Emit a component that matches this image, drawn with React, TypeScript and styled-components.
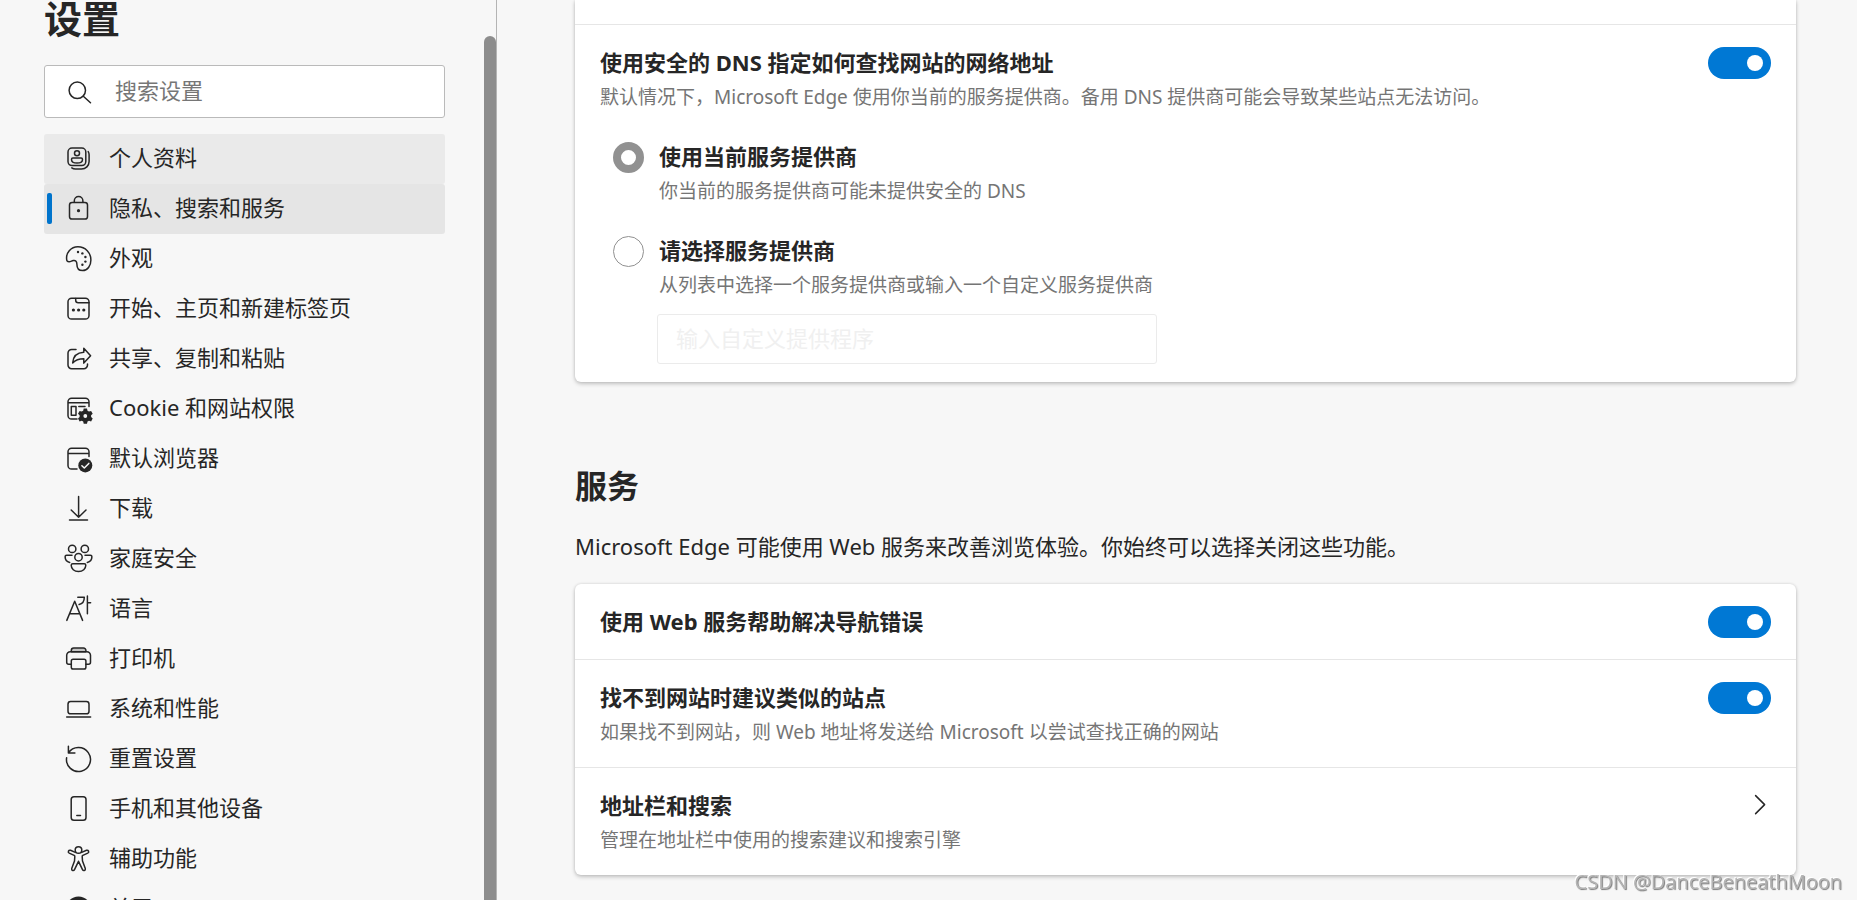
import React from 'react';
import styled, { createGlobalStyle, css } from 'styled-components';

const GlobalStyle = createGlobalStyle`
  *, *::before, *::after { box-sizing: border-box; }
  body {
    margin: 0;
    background: #f7f7f7;
    color: #262626;
    font-family: "Noto Sans", "Noto Sans CJK SC", sans-serif;
    font-size: 22px;
    line-height: 34px;
  }
  input, button { font: inherit; color: inherit; }
`;

const Page = styled.div`
  display: flex;
  height: 100vh;
  overflow: hidden;
`;

const Sidebar = styled.aside`
  display: grid;
  grid-template-columns: 1fr 12px;
  flex: 0 0 497px;
  border-right: 1px solid #b4b4b4;
  overflow: hidden;
`;

const SidebarBody = styled.div`
  min-width: 0;
  padding: 0 39px 0 44px;
`;

const PageTitle = styled.h1`
  margin: 0 0 29px;
  font-size: 38px;
  line-height: 36px;
  font-weight: 700;
`;

const SearchBox = styled.label`
  display: flex;
  align-items: center;
  gap: 23px;
  height: 53px;
  padding: 0 19px;
  margin-bottom: 16px;
  background: #fff;
  border: 1px solid #bababa;
  border-radius: 3px;
`;

const SearchInput = styled.input`
  flex: 1;
  min-width: 0;
  border: 0;
  padding: 0 0 4px;
  outline: none;
  background: transparent;
  &::placeholder { color: #767676; opacity: 1; }
`;

const NavItem = styled.a<{ $state?: 'hover' | 'active' }>`
  position: relative;
  display: flex;
  align-items: center;
  gap: 17px;
  height: 50px;
  padding-left: 20px;
  border-radius: 3px;
  color: inherit;
  text-decoration: none;
  white-space: nowrap;
  ${(p) => p.$state === 'hover' && css`background: #eaeaea;`}
  ${(p) => p.$state === 'active' && css`
    background: #e5e5e5;
    &::before {
      content: '';
      position: absolute;
      left: 3px;
      top: 9px;
      width: 5px;
      height: 31px;
      border-radius: 2px;
      background: #0074cc;
    }
  `}
`;

const NavLabel = styled.span`
  padding-bottom: 5px;
`;

const ScrollRail = styled.div`
  width: 12px;
  height: 100vh;
  padding-top: 36px;
`;

const ScrollHandle = styled.div`
  width: 12px;
  height: 100%;
  background: #8d8d8d;
  border-radius: 6px 6px 0 0;
`;

const Svg = styled.svg`
  display: block;
  flex: 0 0 28px;
  width: 28px;
  height: 28px;
  overflow: visible;
  fill: none;
  stroke: #262626;
  stroke-width: 1.5;
  stroke-linecap: round;
  stroke-linejoin: round;
  .solid { fill: #262626; stroke: none; }
  .light { fill: #f7f7f7; stroke: none; }
  .tick { stroke: #f7f7f7; }
  .shade { fill: #c4c4c4; }
`;

const Main = styled.main`
  flex: 1;
  min-width: 0;
  padding: 0 61px 0 78px;
`;

const Card = styled.section<{ $continued?: boolean }>`
  background: #fff;
  border-radius: ${(p) => (p.$continued ? '0 0 6px 6px' : '6px')};
  padding-top: ${(p) => (p.$continued ? '24px' : '0')};
  box-shadow: 0 2px 4px rgba(0, 0, 0, 0.2), 0 0 3px rgba(0, 0, 0, 0.12);
`;

const Row = styled.div<{ $divided?: boolean }>`
  padding: 21px 25px 18px;
  border-top: ${(p) => (p.$divided ? '1px solid #e6e6e6' : '0')};
`;

const SingleRow = styled(Row)`
  min-height: 75px;
`;

const RowHead = styled.div`
  display: flex;
  align-items: center;
  justify-content: space-between;
  height: 34px;
`;

const LinkRow = styled.a`
  display: block;
  color: inherit;
  text-decoration: none;
`;

const Title = styled.label`
  display: block;
  padding-bottom: 2px;
  line-height: 32px;
  font-weight: 700;
`;

const Description = styled.p`
  margin: 0;
  font-size: 19px;
  color: #757575;
`;

const Toggle = styled.input`
  appearance: none;
  display: flex;
  align-items: center;
  justify-content: flex-end;
  width: 63px;
  height: 32px;
  margin: 0;
  padding: 0 8px;
  border-radius: 16px;
  background: #0078d4;
  &::before {
    content: '';
    width: 16px;
    height: 16px;
    border-radius: 8px;
    background: #fff;
  }
  &:not(:checked) { justify-content: flex-start; background: #8d8d8d; }
`;

const Option = styled.div`
  display: flex;
  align-items: flex-start;
  gap: 15px;
  margin: 26px 0 0 13px;
`;

const Radio = styled.input`
  appearance: none;
  flex: 0 0 31px;
  height: 31px;
  margin: 2px 0 0;
  border: 1px solid #919191;
  border-radius: 16px;
  background: #fff;
  &:checked { border-width: 8px; }
`;

const ProviderInput = styled.input`
  display: block;
  width: 500px;
  max-width: 100%;
  height: 50px;
  margin: 12px 0 0 57px;
  padding: 0 18px 2px;
  border: 1px solid #ebebeb;
  border-radius: 3px;
  background: #fff;
  &::placeholder { color: #f0f0f0; opacity: 1; }
`;

const SectionTitle = styled.h2`
  margin: 84px 0 23px;
  font-size: 32px;
  line-height: 40px;
  font-weight: 700;
`;

const SectionText = styled.p`
  margin: 0 0 21px;
`;

const Watermark = styled.div`
  position: fixed;
  right: 15px;
  bottom: 1px;
  font-family: "Open Sans", sans-serif;
  font-size: 20px;
  color: #b4b4b4;
  text-shadow: 1px 1px 1px #7a7a7a, -1px -1px 0 #fff;
`;

const icons = {
  search: (
    <>
      <circle cx="13.3" cy="12.3" r="8.2" />
      <path d="M19.3 18.2l7.2 6.6" />
    </>
  ),
  profile: (
    <>
      <rect x="4" y="3" width="17.8" height="17.6" rx="4" />
      <path d="M24.2 6.6c.6.9.9 2 .9 3.2v6.7a7.6 7.6 0 0 1-7.6 7.6h-6c-1.5 0-2.8-.5-3.7-1.2" />
      <circle cx="13" cy="8.2" r="2.5" />
      <path d="M8.9 13h8.2c.8 0 1.4.6 1.4 1.4 0 2.4-2.5 3.6-5.5 3.6s-5.5-1.2-5.5-3.6c0-.8.6-1.4 1.4-1.4z" />
    </>
  ),
  lock: (
    <>
      <rect x="5.5" y="7.5" width="18" height="16.6" rx="2.6" />
      <path d="M10.3 7.3V5.9a4.3 4.3 0 0 1 8.6 0v1.4" />
      <circle className="solid" cx="14.5" cy="15.7" r="1.6" />
    </>
  ),
  palette: (
    <>
      <path d="M2.8 15.3C1.4 7.8 7 1.7 13.9 1.7c7.6 0 13 6.1 13 13.3 0 6-3.4 10.6-8.3 10.6-4.4 0-5.7-3-5.7-6.4 0-2.7-1.2-4.2-3.6-3.7-1.7.4-2.8 1.4-4.3 1.3-1.2-.1-2-.5-2.2-1.5z" />
      <circle className="solid" cx="14" cy="7" r="1.2" />
      <circle className="solid" cx="18.4" cy="8.4" r="1.2" />
      <circle className="solid" cx="21.4" cy="12" r="1.2" />
      <circle className="solid" cx="21.4" cy="16.6" r="1.2" />
      <circle className="solid" cx="18.4" cy="19.8" r="1.2" />
    </>
  ),
  start: (
    <>
      <rect x="4" y="3.2" width="21" height="20.8" rx="3.6" />
      <path d="M11.7 3.4v1.8c0 1.4 1 2.5 2.5 2.5H25" />
      <circle className="solid" cx="9.4" cy="15" r="1.6" />
      <circle className="solid" cx="14.6" cy="15" r="1.6" />
      <circle className="solid" cx="19.8" cy="15" r="1.6" />
    </>
  ),
  share: (
    <>
      <path d="M12 4.5H7.6A3.6 3.6 0 0 0 4 8.1v12a3.6 3.6 0 0 0 3.6 3.6h12.3a3.6 3.6 0 0 0 3.6-3.6v-1.2" />
      <path d="M19.8 3.2l6.8 7.5-6.8 7.4v-4.3c-4.6 0-8 .8-11.1 4.1.4-5.6 3.7-10.4 11.1-10.7z" />
    </>
  ),
  cookie: (
    <>
      <path d="M13 24H7.6A3.6 3.6 0 0 1 4 20.4V6.8a3.6 3.6 0 0 1 3.6-3.6h13.8A3.6 3.6 0 0 1 25 6.8v4.7M4 7.7h21" />
      <rect x="7.3" y="11.5" width="4.7" height="8.8" />
      <path d="M14.8 11.5h6.2" />
      <path className="solid" d="M19.7 13.6h3.3l.5 2.2 1.5.8 2.1-.7 1.6 2.9-1.6 1.5v1.7l1.6 1.5-1.6 2.9-2.1-.7-1.5.8-.5 2.2h-3.3l-.5-2.2-1.5-.8-2.1.7-1.6-2.9 1.6-1.5v-1.7L14 18.8l1.6-2.9 2.1.7 1.5-.8z" />
      <circle className="light" cx="21.3" cy="21" r="1.9" />
    </>
  ),
  browser: (
    <>
      <path d="M13 24H7.6A3.6 3.6 0 0 1 4 20.4V6.8a3.6 3.6 0 0 1 3.6-3.6h13.8A3.6 3.6 0 0 1 25 6.8v4.7M4 8.4h21" />
      <circle className="solid" cx="21.3" cy="20.4" r="7" />
      <path className="tick" d="M17.9 20.7l2.4 2.3 4.5-4.6" />
    </>
  ),
  download: <path d="M14.6 1.6v20.6M7.2 15l7.4 7.3L22 15M5.5 25h18" />,
  family: (
    <>
      <circle cx="8.2" cy="3.9" r="3.7" />
      <circle cx="20.8" cy="3.9" r="3.7" />
      <circle cx="14.5" cy="12.2" r="3.7" />
      <path d="M8 10.3H2.6c-.8 0-1.5.7-1.5 1.5 0 2.9 1.7 5 4.6 5.6M21 10.3h5.4c.8 0 1.5.7 1.5 1.5 0 2.9-1.7 5-4.6 5.6" />
      <path d="M8.7 18.7h11.6c.8 0 1.5.7 1.5 1.5 0 3.6-3 6.4-7.3 6.4s-7.3-2.8-7.3-6.4c0-.8.7-1.5 1.5-1.5z" />
    </>
  ),
  language: (
    <path d="M2.8 25.4L10.7 6.3l7.9 19.1M5.7 18.7h10M13.8 2.2h6.5c0 4-1.6 6.6-5.2 7.3M23.4 1v17.8M23.4 7.8h3.2" />
  ),
  printer: (
    <>
      <path className="shade" d="M7.3 6.7V5.4a2.4 2.4 0 0 1 2.4-2.4h9.8a2.4 2.4 0 0 1 2.4 2.4v1.3z" />
      <path d="M7.3 19.3H4.7a2 2 0 0 1-2-2v-7a3.6 3.6 0 0 1 3.6-3.6h16.6a3.6 3.6 0 0 1 3.6 3.6v7a2 2 0 0 1-2 2h-2.6" />
      <rect x="7.3" y="14.3" width="14.6" height="9.7" rx="1.8" />
    </>
  ),
  system: (
    <>
      <rect x="4" y="6.6" width="21" height="12.2" rx="2.6" />
      <path d="M2.7 21.9h23.9" />
    </>
  ),
  reset: <path d="M4.4 1.3V8h6.5M4.4 8a12 12 0 1 1-1.8 4.8" />,
  phone: (
    <>
      <rect x="7.2" y="1.7" width="14.8" height="23.6" rx="2.8" />
      <path d="M12.8 20.4h3.7" />
    </>
  ),
  access: (
    <>
      <circle cx="14.5" cy="5" r="3.3" />
      <path d="M11.3 7.4L6.5 5.3c-1.9-.7-3.1 1.9-1.3 2.8l5 2.3c.5.3.7.7.6 1.3L10.5 16l-2.8 7.6c-.5 2 2 2.7 2.8 1l4-8.3 4 8.3c.8 1.7 3.3 1 2.8-1L18.5 16l-.3-4.3c-.1-.6.1-1 .6-1.3l5-2.3c1.8-.9.6-3.5-1.3-2.8l-4.8 2.1" />
    </>
  ),
  edge: (
    <>
      <circle className="solid" cx="14.5" cy="14.3" r="12.8" />
      <path className="light" d="M3.5 18c3-5 9-6 12-3 2 2-1 4 2 5.5 2.5 1 5 .5 7-1-4 8-19 8-21-1.5z" />
    </>
  ),
  chevron: <path d="M12.6 3.6l9 9-9 9" />,
};

type IconName = keyof typeof icons;

const Icon = ({ name }: { name: IconName }) => (
  <Svg viewBox="0 0 28 28" aria-hidden="true">{icons[name]}</Svg>
);

const navItems: { icon: IconName; label: string; state?: 'hover' | 'active' }[] = [
  { icon: 'profile', label: '个人资料', state: 'hover' },
  { icon: 'lock', label: '隐私、搜索和服务', state: 'active' },
  { icon: 'palette', label: '外观' },
  { icon: 'start', label: '开始、主页和新建标签页' },
  { icon: 'share', label: '共享、复制和粘贴' },
  { icon: 'cookie', label: 'Cookie 和网站权限' },
  { icon: 'browser', label: '默认浏览器' },
  { icon: 'download', label: '下载' },
  { icon: 'family', label: '家庭安全' },
  { icon: 'language', label: '语言' },
  { icon: 'printer', label: '打印机' },
  { icon: 'system', label: '系统和性能' },
  { icon: 'reset', label: '重置设置' },
  { icon: 'phone', label: '手机和其他设备' },
  { icon: 'access', label: '辅助功能' },
  { icon: 'edge', label: '关于 Microsoft Edge' },
];

export default function App() {
  return (
    <>
      <GlobalStyle />
      <Page lang="zh-CN">
        <Sidebar>
          <SidebarBody>
            <PageTitle>设置</PageTitle>
            <SearchBox>
              <Icon name="search" />
              <SearchInput type="text" placeholder="搜索设置" aria-label="搜索设置" />
            </SearchBox>
            <nav>
              {navItems.map((item) => (
                <NavItem
                  key={item.label}
                  href="#"
                  $state={item.state}
                  aria-current={item.state === 'active' ? 'page' : undefined}
                >
                  <Icon name={item.icon} />
                  <NavLabel>{item.label}</NavLabel>
                </NavItem>
              ))}
            </nav>
          </SidebarBody>
          <ScrollRail>
            <ScrollHandle />
          </ScrollRail>
        </Sidebar>

        <Main>
          <Card $continued>
            <Row $divided>
              <RowHead>
                <Title htmlFor="dns">使用安全的 DNS 指定如何查找网站的网络地址</Title>
                <Toggle id="dns" type="checkbox" role="switch" defaultChecked />
              </RowHead>
              <Description>
                默认情况下，Microsoft Edge 使用你当前的服务提供商。备用 DNS 提供商可能会导致某些站点无法访问。
              </Description>
              <Option>
                <Radio id="current" type="radio" name="provider" defaultChecked />
                <div>
                  <Title htmlFor="current">使用当前服务提供商</Title>
                  <Description>你当前的服务提供商可能未提供安全的 DNS</Description>
                </div>
              </Option>
              <Option>
                <Radio id="custom" type="radio" name="provider" />
                <div>
                  <Title htmlFor="custom">请选择服务提供商</Title>
                  <Description>从列表中选择一个服务提供商或输入一个自定义服务提供商</Description>
                </div>
              </Option>
              <ProviderInput type="text" placeholder="输入自定义提供程序" aria-label="输入自定义提供程序" disabled />
            </Row>
          </Card>

          <SectionTitle>服务</SectionTitle>
          <SectionText>Microsoft Edge 可能使用 Web 服务来改善浏览体验。你始终可以选择关闭这些功能。</SectionText>

          <Card>
            <SingleRow>
              <RowHead>
                <Title htmlFor="navigation">使用 Web 服务帮助解决导航错误</Title>
                <Toggle id="navigation" type="checkbox" role="switch" defaultChecked />
              </RowHead>
            </SingleRow>
            <Row $divided>
              <RowHead>
                <Title htmlFor="similar">找不到网站时建议类似的站点</Title>
                <Toggle id="similar" type="checkbox" role="switch" defaultChecked />
              </RowHead>
              <Description>如果找不到网站，则 Web 地址将发送给 Microsoft 以尝试查找正确的网站</Description>
            </Row>
            <Row $divided>
              <LinkRow href="#">
                <RowHead>
                  <Title as="span">地址栏和搜索</Title>
                  <Icon name="chevron" />
                </RowHead>
                <Description>管理在地址栏中使用的搜索建议和搜索引擎</Description>
              </LinkRow>
            </Row>
          </Card>
        </Main>
      </Page>
      <Watermark>CSDN @DanceBeneathMoon</Watermark>
    </>
  );
}
